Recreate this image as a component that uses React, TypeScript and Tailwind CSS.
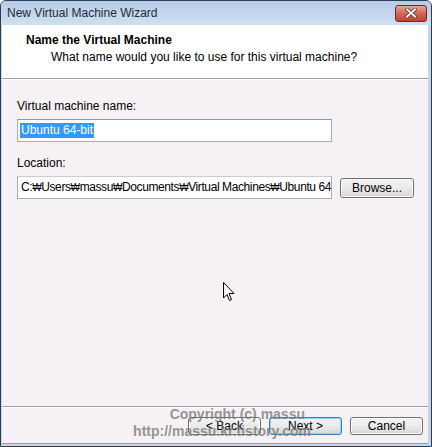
import React from 'react';

const font = { fontFamily: '"Liberation Sans", "Noto Sans", sans-serif' };

const Field = ({ label, children }: { label: string; children: React.ReactNode }) => (
    <div className="flex flex-col gap-[5px]">
        <div className="text-[12px] leading-[15px] text-black">{label}</div>
        {children}
    </div>
);

const Button = ({ label, focused = false, className = '' }: { label: string; focused?: boolean; className?: string }) => (
    <div
        className={
            'flex items-center justify-center rounded-[3px] border text-[12px] text-black bg-gradient-to-b from-[#f2f2f2] via-[#ebebeb] to-[#d6d6d6] ' +
            (focused ? 'border-[#3c7fb1] shadow-[inset_0_0_0_1px_#8fd3f5]' : 'border-[#707070] shadow-[inset_0_0_0_1px_#fbfbfb]') +
            ' ' +
            className
        }
    >
        {label}
    </div>
);

const Cursor = () => (
    <svg className="absolute left-[222px] top-[281px]" width="13" height="20" viewBox="0 0 13 20">
        <path d="M0.5 0.5 L0.5 16 L4 12.5 L6.5 18.5 L8.5 17.5 L6 11.5 L11 11.5 Z" fill="#fff" stroke="#000" strokeWidth="1" />
    </svg>
);

// path segments, joined by the won sign the Korean Windows uses as a backslash
const pathParts = ['C:', 'Users', 'massu', 'Documents', 'Virtual Machines', 'Ubuntu 64-bit'];

export default function App() {
    return (
        <div style={font} className="relative w-[432px] h-[447px] overflow-hidden bg-[#c3d6ec] border border-[#2d3d52] rounded-t-[6px] flex flex-col">
            {/* title bar */}
            <div className="h-[24px] flex items-center justify-between pl-[6px] pr-[4px] bg-gradient-to-b from-[#b7cde6] to-[#cfdff1]">
                <span className="text-[12px] text-[#1e2a3a]">New Virtual Machine Wizard</span>
                <div className="w-[32px] h-[17px] rounded-[3px] border border-[#6b2c25] bg-gradient-to-b from-[#e6a597] via-[#d2675a] to-[#c0412f] flex items-center justify-center">
                    <svg width="12" height="10" viewBox="0 0 12 10">
                        <path d="M2 1.5 L10 8.5 M10 1.5 L2 8.5" stroke="#5a1f18" strokeWidth="3.4" strokeLinecap="square" />
                        <path d="M2 1.5 L10 8.5 M10 1.5 L2 8.5" stroke="#fff" strokeWidth="2" strokeLinecap="square" />
                    </svg>
                </div>
            </div>

            {/* client area */}
            <div className="flex-1 ml-[1px] mr-[3px] mb-[2px] flex flex-col bg-[#f5f1f5] border-b border-[#7fa6cf]">
                <div className="h-[54px] bg-white border-b border-[#a0a0a0] flex flex-col pt-[8px]">
                    <div className="pl-[24px] text-[12px] leading-[15px] font-bold text-black">Name the Virtual Machine</div>
                    <div className="pl-[49px] pt-[2px] text-[12px] leading-[15px] text-black">What name would you like to use for this virtual machine?</div>
                </div>
                <div className="border-t border-white" />

                <div className="flex flex-col gap-[14px] pl-[15px] pt-[19px]">
                    <Field label="Virtual machine name:">
                        <div className="w-[315px] h-[23px] bg-white border border-[#abadb3] border-t-[#8e9bae] flex items-center px-[2px]">
                            <span className="bg-[#3399ff] text-white text-[12px] leading-[15px] px-[1px]">Ubuntu 64-bit</span>
                        </div>
                    </Field>
                    <Field label="Location:">
                        <div className="flex items-center gap-[8px]">
                            <div className="w-[315px] h-[23px] bg-white border border-[#abadb3] border-t-[#c8cdd6] flex items-center px-[3px] overflow-hidden whitespace-nowrap">
                                <span className="text-[12px] leading-[15px] text-black tracking-[-0.4px]">
                                    {pathParts.map((p, i) => (
                                        <React.Fragment key={i}>
                                            {i > 0 && <span className="text-[10px]">₩</span>}
                                            {p}
                                        </React.Fragment>
                                    ))}
                                </span>
                            </div>
                            <Button label="Browse..." className="w-[74px] h-[20px]" />
                        </div>
                    </Field>
                </div>

                <div className="flex-1" />
                <div className="border-t border-[#a0a0a0]" />
                <div className="border-t border-white" />
                <div className="flex justify-end gap-[8px] pr-[5px] pt-[9px] pb-[8px]">
                    <Button label="< Back" className="w-[73px] h-[18px]" />
                    <Button label="Next >" focused className="w-[73px] h-[18px]" />
                    <Button label="Cancel" className="w-[73px] h-[18px]" />
                </div>
            </div>

            <Cursor />

            {/* watermark */}
            <div className="absolute left-[130px] top-[405px] w-[180px] flex flex-col items-end text-[14px] leading-[17px] font-bold text-[#7a7a7a]/80 pointer-events-none">
                <span className="pr-[6px]">Copyright (c) massu</span>
                <span>http://massu.kr.tistory.com</span>
            </div>
        </div>
    );
}
